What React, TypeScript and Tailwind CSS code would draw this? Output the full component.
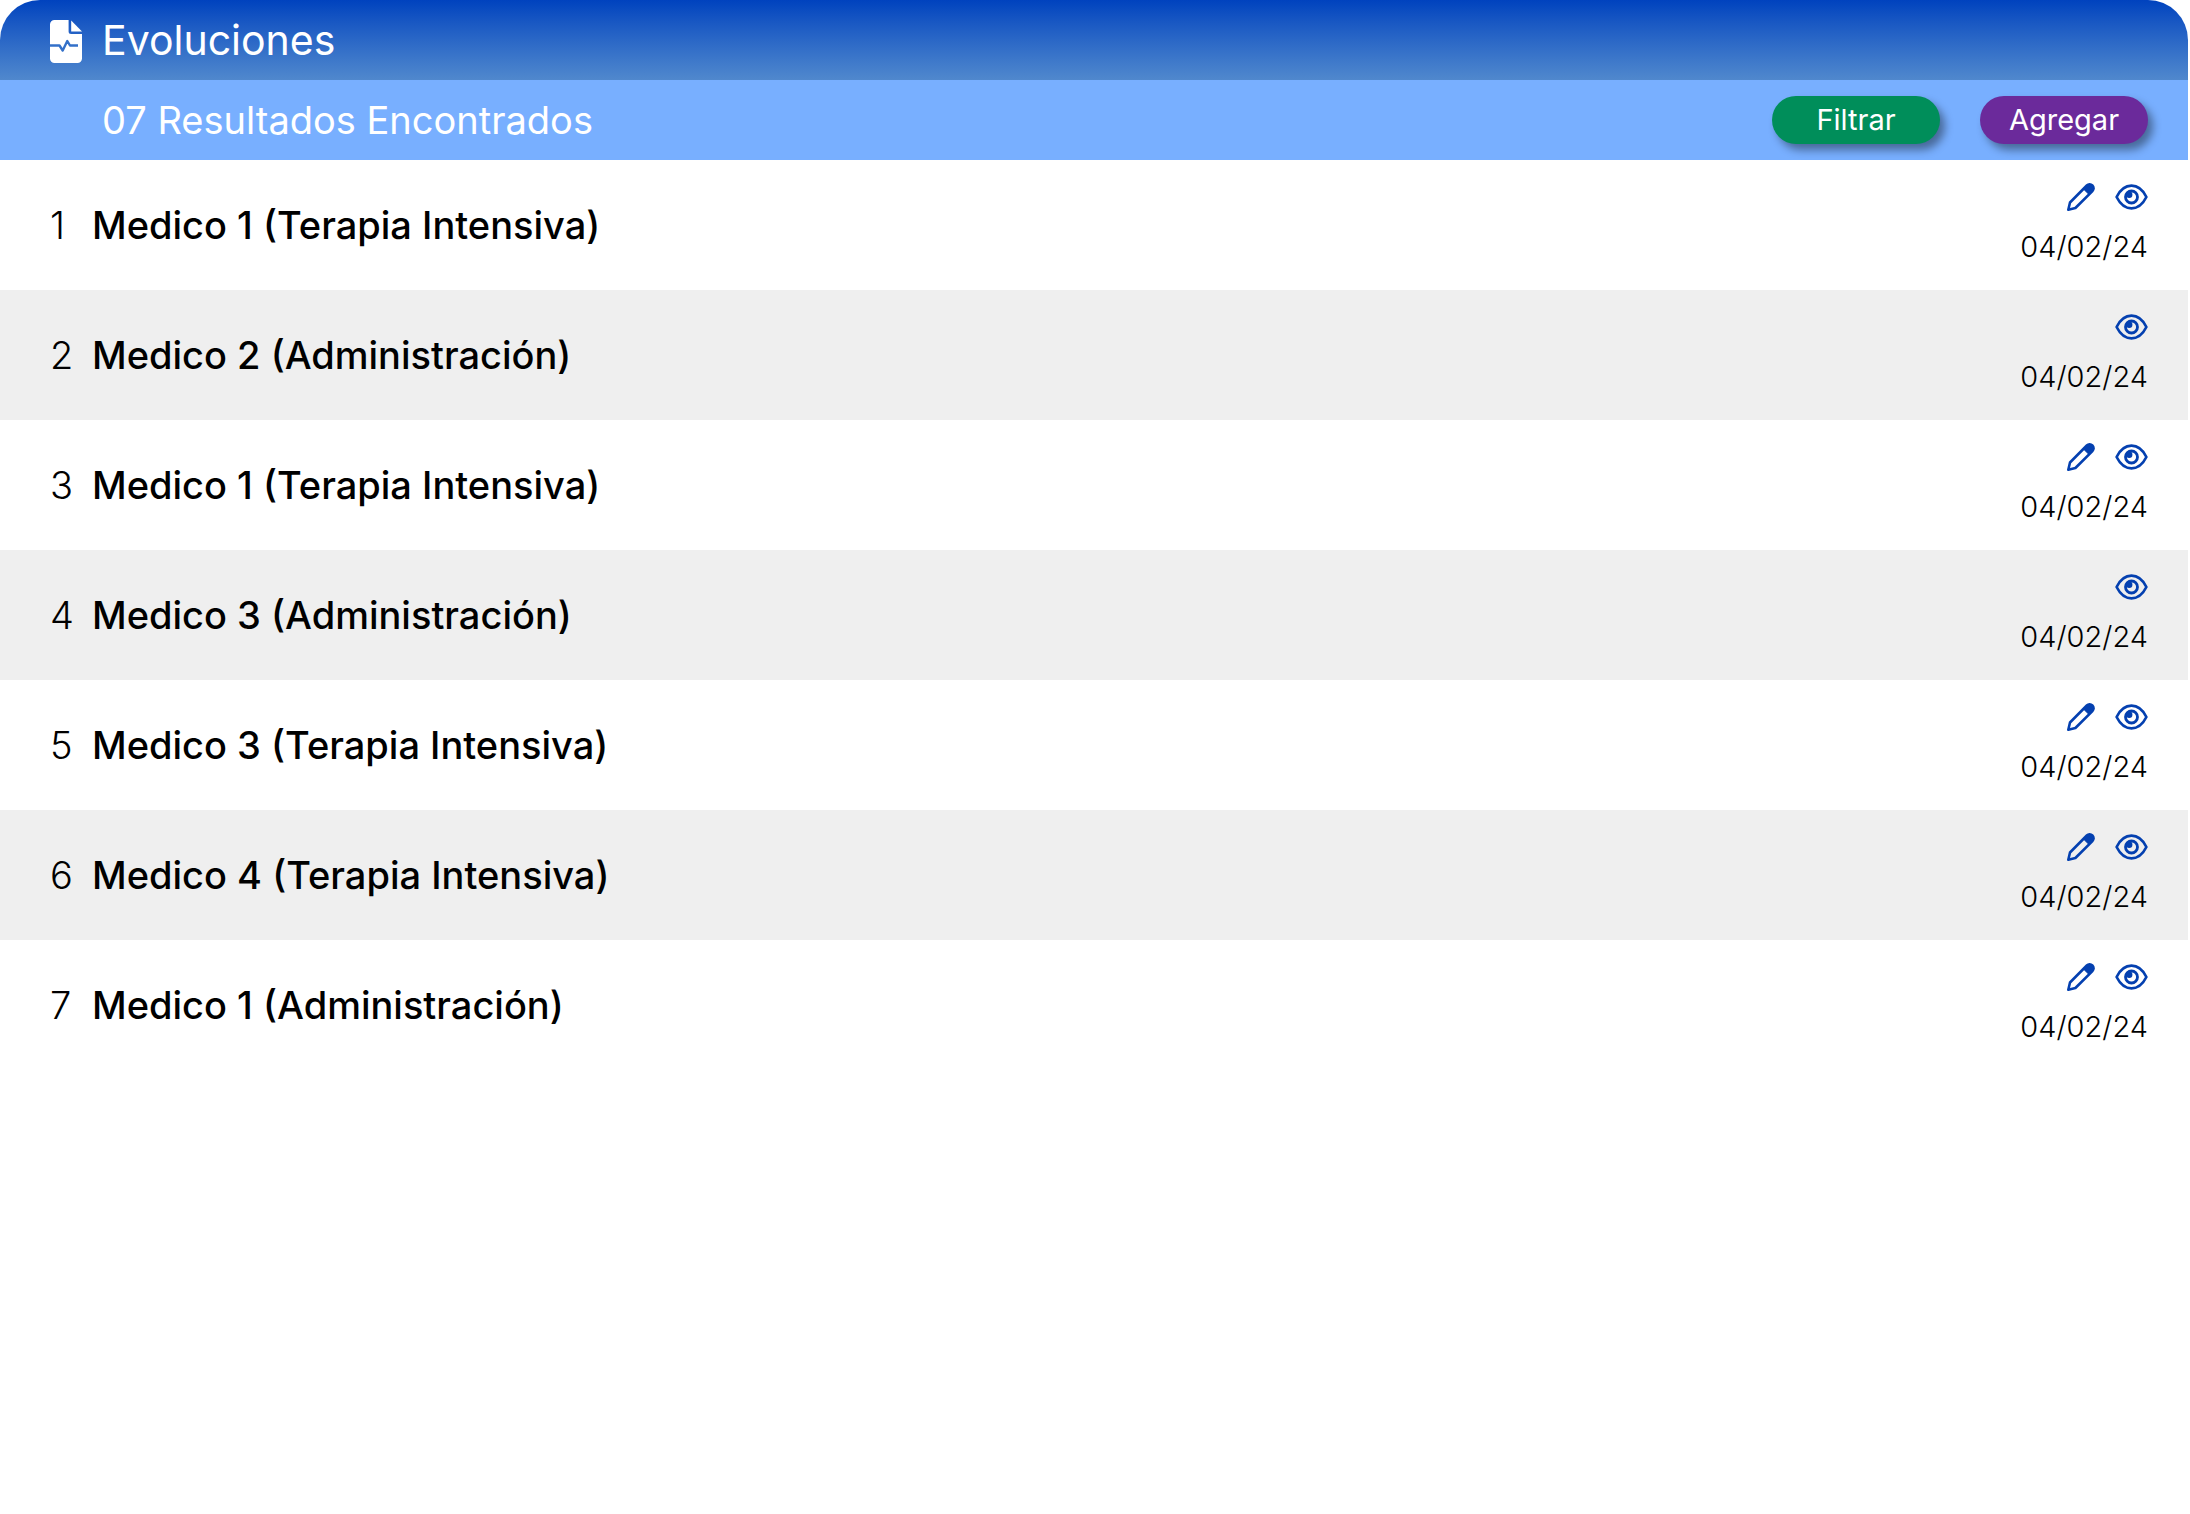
type Evolution = {
  id: number;
  name: string;
  area: string;
  date: string;
  editable: boolean;
};

const evolutions: Evolution[] = [
  { id: 1, name: "Medico 1", area: "Terapia Intensiva", date: "04/02/24", editable: true },
  { id: 2, name: "Medico 2", area: "Administración", date: "04/02/24", editable: false },
  { id: 3, name: "Medico 1", area: "Terapia Intensiva", date: "04/02/24", editable: true },
  { id: 4, name: "Medico 3", area: "Administración", date: "04/02/24", editable: false },
  { id: 5, name: "Medico 3", area: "Terapia Intensiva", date: "04/02/24", editable: true },
  { id: 6, name: "Medico 4", area: "Terapia Intensiva", date: "04/02/24", editable: true },
  { id: 7, name: "Medico 1", area: "Administración", date: "04/02/24", editable: true },
];

// document with a folded corner and a pulse line
function FileIcon() {
  return (
    <svg viewBox="0 -3 32 46" className="w-8 h-[46px] shrink-0" aria-hidden="true">
      <path
        d="M4.5 0H18.6v11.5a2.5 2.5 0 0 0 2.5 2.5H32v24.5a4.5 4.5 0 0 1-4.5 4.5h-23A4.5 4.5 0 0 1 0 38.5v-34A4.5 4.5 0 0 1 4.5 0Z"
        fill="white"
      />
      <path d="M21.2.6 32 11.6H21.2Z" fill="white" />
      <path
        d="M0 25.5H9.5L12.7 30.5 17.3 21 20 25.5H28"
        fill="none"
        stroke="#3370c9"
        strokeWidth="2.4"
        strokeLinejoin="round"
      />
    </svg>
  );
}

function PencilIcon() {
  return (
    <svg viewBox="0 0 28 28" className="w-7 h-7" fill="none" aria-hidden="true">
      <path
        d="M1.3 26.7 3 19.5 19.8 2.5a3.9 3.9 0 0 1 5.6 5.6L8.4 25Z"
        stroke="currentColor"
        strokeWidth="2.6"
        strokeLinejoin="round"
      />
      <path
        d="M16.4 5.9 19.8 2.5a3.9 3.9 0 0 1 5.6 5.6L22 11.5Z"
        fill="currentColor"
        stroke="currentColor"
        strokeLinejoin="round"
      />
    </svg>
  );
}

function EyeIcon() {
  return (
    <svg viewBox="0 0 33 26" className="w-[33px] h-[26px]" fill="none" aria-hidden="true">
      <path
        d="M1.6 13C5 6.200 10.300 1.700 16.500 1.700S28 6.200 31.400 13C28 19.800 22.700 24.300 16.500 24.300S5 19.800 1.600 13Z"
        stroke="currentColor"
        strokeWidth="2.7"
        strokeLinejoin="round"
      />
      <circle cx="16.5" cy="13" r="6" stroke="currentColor" strokeWidth="2.8" />
      <circle cx="14.2" cy="10.8" r="3.2" fill="currentColor" />
    </svg>
  );
}

export default function App() {
  return (
    <main className="mr-0.5 font-['Inter',sans-serif] text-black">
      <header className="flex items-center gap-5 h-20 pl-[50px] rounded-t-[40px] bg-linear-to-b from-[#0042be] to-[#5088cd] text-white">
        <FileIcon />
        <h1 className="text-[41px] leading-none">Evoluciones</h1>
      </header>

      <div className="flex items-center justify-between h-20 pl-[102px] pr-10 bg-[#78afff] text-white">
        <h2 className="text-[38px]">07 Resultados Encontrados</h2>
        <div className="flex gap-10">
          <button
            type="button"
            className="w-[168px] h-12 rounded-full bg-[#008e5a] text-[29px] shadow-[5px_6px_8px_rgba(0,0,0,0.4)]"
          >
            Filtrar
          </button>
          <button
            type="button"
            className="w-[168px] h-12 rounded-full bg-[#6b2a9b] text-[29px] shadow-[5px_6px_8px_rgba(0,0,0,0.4)]"
          >
            Agregar
          </button>
        </div>
      </div>

      <ul>
        {evolutions.map((item) => (
          <li
            key={item.id}
            className="flex items-center h-[130px] pl-[50px] pr-10 even:bg-[#efefef]"
          >
            <span className="w-[42px] text-[38px] font-light">{item.id}</span>
            <span className="flex-1 text-[38px] font-medium">
              {item.name} ({item.area})
            </span>
            <div className="flex flex-col items-end gap-4 pb-1">
              <div className="flex items-center gap-5 h-8 text-[#0440b0]">
                {item.editable && (
                  <button type="button" aria-label="Editar">
                    <PencilIcon />
                  </button>
                )}
                <button type="button" aria-label="Ver">
                  <EyeIcon />
                </button>
              </div>
              <time className="text-[29px] leading-9 font-light">{item.date}</time>
            </div>
          </li>
        ))}
      </ul>
    </main>
  );
}
